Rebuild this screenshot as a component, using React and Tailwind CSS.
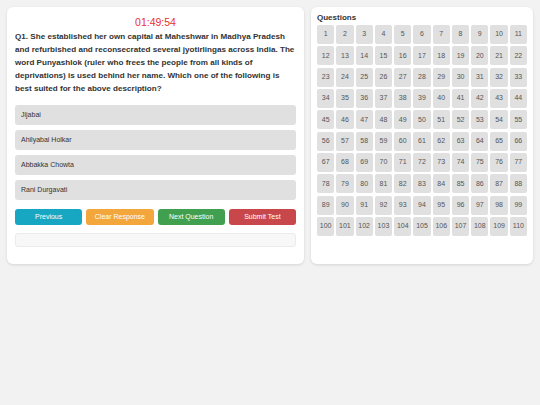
import React from 'react';

const options = ['Jijabai', 'Ahilyabai Holkar', 'Abbakka Chowta', 'Rani Durgavati'];

const buttons = [
  { label: 'Previous', cls: 'bg-[#17a7c2]' },
  { label: 'Clear Response', cls: 'bg-[#f2a63c]' },
  { label: 'Next Question', cls: 'bg-[#40a04f]' },
  { label: 'Submit Test', cls: 'bg-[#c8474b]' },
];

const numbers = Array.from({ length: 110 }, (_, i) => i + 1);

export default function App() {
  return (
    <div
      className="w-[540px] h-[405px] bg-[#f2f2f2] p-[7px] flex gap-[7px] items-start"
      style={{ fontFamily: '"Liberation Sans", Arial, sans-serif' }}
    >
      {/* Question panel */}
      <div className="w-[297px] h-[257px] bg-white rounded-[6px] shadow-[0_1px_3px_rgba(0,0,0,0.12)] px-[8px] pt-[8px]">
        <div className="text-center text-[10.5px] leading-[15px] text-[#e8302f]">01:49:54</div>
        <p className="text-[8.1px] leading-[13px] font-bold text-[#333]">
          Q1. She established her own capital at Maheshwar in Madhya Pradesh and refurbished and
          reconsecrated several jyotirlingas across India. The word Punyashlok (ruler who frees the
          people from all kinds of deprivations) is used behind her name. Which one of the following is
          best suited for the above description?
        </p>

        <div className="mt-[10px] flex flex-col gap-[5px]">
          {options.map((opt) => (
            <div
              key={opt}
              className="h-[20px] bg-[#e0e0e0] rounded-[3px] px-[6px] flex items-center text-[7px] text-[#333]"
            >
              {opt}
            </div>
          ))}
        </div>

        <div className="mt-[9px] grid grid-cols-4 gap-[4px]">
          {buttons.map((b) => (
            <button
              key={b.label}
              className={`${b.cls} h-[16px] rounded-[3px] text-white text-[7px] flex items-center justify-center`}
            >
              {b.label}
            </button>
          ))}
        </div>

        <div className="mt-[8px] h-[14px] bg-[#f7f7f7] border border-[#ebebeb] rounded-[3px]"></div>
      </div>

      {/* Question palette */}
      <div className="w-[222px] h-[257px] bg-white rounded-[6px] shadow-[0_1px_3px_rgba(0,0,0,0.12)] px-[6px] pt-[6px]">
        <div className="text-[8px] leading-[10px] font-bold text-[#333]">Questions</div>
        <div className="mt-[2px] grid grid-cols-11 gap-x-[2px] gap-y-[2.33px]">
          {numbers.map((n) => (
            <div
              key={n}
              className="h-[19px] bg-[#e0e0e0] rounded-[2px] flex items-center justify-center text-[7px] text-[#555]"
            >
              {n}
            </div>
          ))}
        </div>
      </div>
    </div>
  );
}
